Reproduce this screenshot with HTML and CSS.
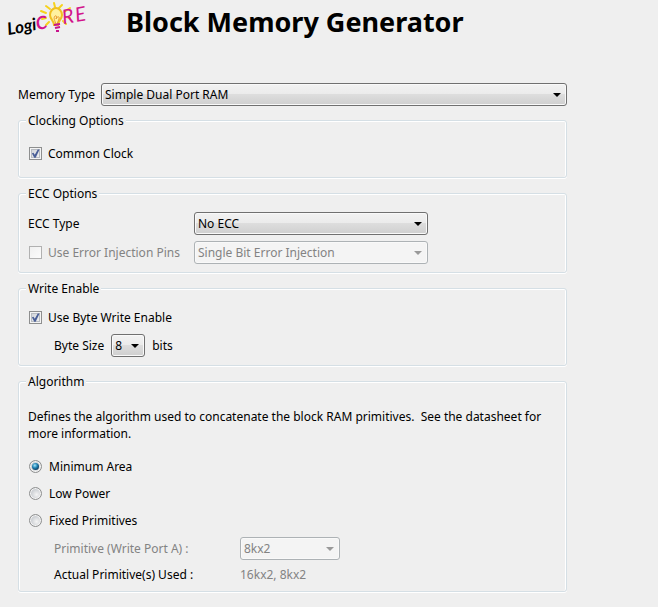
FILE: index.html
```html
<!DOCTYPE html>
<html lang="en">
<head>
    <meta charset="UTF-8">
    <meta name="viewport" content="width=device-width, initial-scale=1.0">
    <title>Block Memory Generator</title>
    <link rel="stylesheet" href="styles.css">
</head>
<body>
    <header class="header">
        <svg class="logo" viewBox="0 0 84 38" role="img" aria-label="LogiCORE">
            <g stroke="#f6d21c" stroke-width="2" stroke-linecap="round">
                <path d="M33 11l5 2M38 6l4 3M46 3l1 4M54 5l-3 3M62 8l-6 4M34 19l4-1M62 18l-4-1M38 25l3-3M58 24l-3-3"/>
            </g>
            <path d="M46 25c0-4-4-6-4-10 0-4 3-7 6-7s6 3 6 7-4 6-4 10z" fill="#fff2a0" stroke="#f0c020" stroke-width="2"/>
            <path d="M48 24c-1-3-3-6-1-8 2-1 2 2 1 3 1-3 4-3 3 0l-2 5" fill="none" stroke="#e89a30" stroke-width="1"/>
            <path d="M46 25l6-1M47 28l5-1M48 31h3" stroke="#c8148c" stroke-width="2"/>
            <g class="logo-text" transform="rotate(-10 0 33)">
                <text x="0" y="35" class="logo-logi">Logi</text>
                <text x="29" y="35" class="logo-core">C</text>
                <text x="56" y="34" class="logo-core logo-small">R</text>
                <text x="69" y="34" class="logo-core logo-small">E</text>
            </g>
        </svg>
        <h1>Block Memory Generator</h1>
    </header>

    <form class="options">
        <div class="row memory-type">
            <label for="memory-type">Memory Type</label>
            <span class="select wide">
                <select id="memory-type">
                    <option>Simple Dual Port RAM</option>
                </select>
            </span>
        </div>

        <fieldset class="clocking">
            <legend>Clocking Options</legend>
            <label class="row check"><input type="checkbox" checked> Common Clock</label>
        </fieldset>

        <fieldset class="ecc">
            <legend>ECC Options</legend>
            <label for="ecc-type">ECC Type</label>
            <span class="select">
                <select id="ecc-type">
                    <option>No ECC</option>
                </select>
            </span>
            <label class="row check disabled"><input type="checkbox" disabled> Use Error Injection Pins</label>
            <span class="select disabled">
                <select aria-label="Error injection type" disabled>
                    <option>Single Bit Error Injection</option>
                </select>
            </span>
        </fieldset>

        <fieldset class="write-enable">
            <legend>Write Enable</legend>
            <label class="row check"><input type="checkbox" checked> Use Byte Write Enable</label>
            <div class="row indent">
                <label for="byte-size">Byte Size</label>
                <span class="select">
                    <select id="byte-size">
                        <option>8</option>
                        <option>9</option>
                    </select>
                </span>
                <span>bits</span>
            </div>
        </fieldset>

        <fieldset class="algorithm">
            <legend>Algorithm</legend>
            <p>Defines the algorithm used to concatenate the block RAM primitives.&nbsp; See the datasheet for more information.</p>
            <label class="row radio"><input type="radio" name="algorithm" checked> Minimum Area</label>
            <label class="row radio"><input type="radio" name="algorithm"> Low Power</label>
            <label class="row radio"><input type="radio" name="algorithm"> Fixed Primitives</label>
            <div class="primitives indent">
                <label class="disabled" for="primitive">Primitive (Write Port A) :</label>
                <span class="select disabled">
                    <select id="primitive" disabled>
                        <option>8kx2</option>
                    </select>
                </span>
                <span>Actual Primitive(s) Used :</span>
                <output class="disabled">16kx2, 8kx2</output>
            </div>
        </fieldset>
    </form>
</body>
</html>
```
FILE: styles.css
```css
* {
    box-sizing: border-box;
}
body {
    margin: 0;
    background: #efefef;
    color: #000;
    font: 12px/17px "Noto Sans", sans-serif;
}
.header {
    display: flex;
    align-items: flex-start;
    gap: 34px;
    padding: 0 8px;
    height: 83px;
}
.logo {
    width: 84px;
    height: 38px;
    flex: none;
    overflow: visible;
}
.logo-text {
    font-family: Lato, sans-serif;
    font-style: italic;
}
.logo-logi {
    font-size: 17px;
    font-weight: bold;
}
.logo-core {
    font-size: 18px;
    font-weight: bold;
    fill: #d2148c;
}
.logo-small {
    font-size: 20px;
    font-weight: normal;
}
h1 {
    margin: 6px 0 0;
    font: bold 27px/32px "Noto Sans", sans-serif;
}
.options {
    padding: 0 91px 14px 18px;
}
.row {
    display: flex;
    align-items: center;
    gap: 6px;
}
.indent {
    padding-left: 26px;
}
.disabled {
    color: #838383;
}

fieldset {
    min-width: 0;
    margin: 0 0 7px;
    padding: 0 9px 8px;
    border: 1px solid #d5dfe5;
    border-radius: 3px;
    box-shadow: inset 1px 1px #fff, inset -1px 0 #fff, 0 1px #fff;
}
legend {
    height: 16px;
    margin-left: -2px;
    padding: 0 2px;
    background: #efefef;
    line-height: 18px;
}

/* drop-downs */
.select {
    position: relative;
    display: block;
}
.select::after {
    content: "";
    position: absolute;
    top: 10px;
    right: 6px;
    border: 4px solid transparent;
    border-top-color: #000;
    border-bottom: 0;
    pointer-events: none;
}
.select.disabled::after {
    border-top-color: #999;
}
select {
    display: block;
    appearance: none;
    width: 100%;
    height: 23px;
    margin: 0;
    padding: 0 3px;
    border: 1px solid #707070;
    border-radius: 3px;
    background: linear-gradient(#f2f2f2, #ebebeb 48%, #dddddd 50%, #cfcfcf);
    box-shadow: inset 0 0 0 1px #f9f9f9;
    color: #000;
    font: inherit;
}
select:disabled {
    border-color: #adb2b5;
    background: #f4f4f4;
    color: #838383;
    opacity: 1;
}

/* tick boxes and radios */
input {
    position: relative;
    appearance: none;
    flex: none;
    width: 13px;
    height: 13px;
    margin: 0 0 0 1px;
    border: 1px solid #8e8f8f;
}
.check {
    height: 23px;
}
.check input {
    background: linear-gradient(135deg, #cbcfd5, #f6f6f6);
    box-shadow: inset 0 0 0 1px #f4f4f4, inset 0 0 0 2px #b8bcc2;
}
.check input:checked::before {
    content: "";
    position: absolute;
    inset: 1px;
    background: #4a5f97;
    clip-path: polygon(10% 48%, 28% 42%, 42% 64%, 75% 5%, 95% 5%, 52% 98%, 36% 98%);
}
.check input:disabled {
    border-color: #b1b1b1;
    background: linear-gradient(135deg, #f0f0f0, #fbfbfb);
    box-shadow: none;
}
.radio {
    height: 27px;
    gap: 7px;
}
.radio input {
    border-radius: 50%;
    background: radial-gradient(circle at 60% 60%, #f4f4f4, #c4c8cd 70%);
    box-shadow: inset 0 0 0 1px #f4f4f4;
}
.radio input:checked::before {
    content: "";
    position: absolute;
    inset: 2px;
    border-radius: 50%;
    background: radial-gradient(circle at 40% 35%, #a8e4f8, #1f83b4 40%, #0d2f4f 80%);
}

/* groups */
.memory-type {
    margin-bottom: 6px;
}
.wide {
    flex: 1;
}
.clocking {
    padding-top: 14px;
    padding-bottom: 12px;
}
.ecc {
    display: grid;
    grid-template-columns: 166px minmax(0, 234px);
    align-items: center;
    row-gap: 6px;
    padding-top: 11px;
}
.write-enable {
    padding-top: 10px;
}
.write-enable .indent {
    gap: 7px;
    margin-top: 5px;
}
.write-enable .select {
    width: 34px;
}
.algorithm {
    padding-top: 19px;
}
.algorithm p {
    margin: 0 0 11px;
    padding-right: 8px;
}
.primitives {
    display: grid;
    grid-template-columns: 186px 100px;
    align-items: center;
    row-gap: 6px;
    margin-top: 3px;
}
```
